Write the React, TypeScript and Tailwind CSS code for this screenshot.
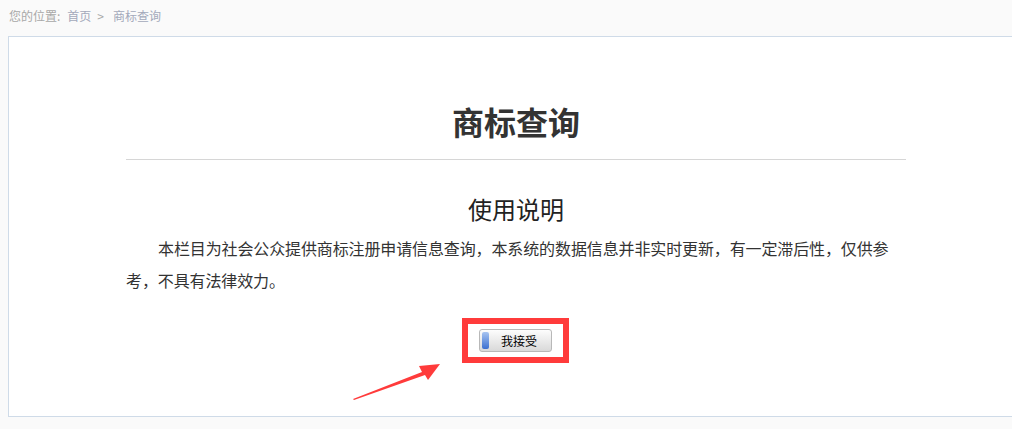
import React from 'react';

const App = () => {
  return (
    <div className="relative min-h-[429px] w-[1012px] overflow-hidden bg-[#fafafa] font-['Noto_Sans_CJK_SC',sans-serif]">
      {/* Breadcrumb */}
      <div className="flex h-[36px] items-center pl-[9px] pb-[4px] text-[12px] text-[#a8a8a8]">
        <span>您的位置:</span>
        <span className="ml-[7px] text-[#a3a9bb]">首页</span>
        <span className="ml-[6px]">&gt;</span>
        <span className="ml-[9px] text-[#a3a9bb]">商标查询</span>
      </div>

      {/* Content box */}
      <div className="ml-[8px] h-[381px] w-[1016px] border border-[#cfdbe8] bg-white">
        <div className="mx-auto w-[780px] pt-[64px]">
          <h1 className="text-center text-[32px] font-bold leading-[40px] text-[#333]">商标查询</h1>
          <div className="mt-[18px] h-px bg-[#d6d6d6]" />
          <h2 className="mt-[33px] text-center text-[24px] leading-[32px] text-[#222]">使用说明</h2>
          <p className="mt-[7px] whitespace-nowrap indent-[32px] text-[16px] leading-[32px] tracking-[-0.12px] text-[#333]">
            本栏目为社会公众提供商标注册申请信息查询，本系统的数据信息并非实时更新，有一定滞后性，仅供参
            <br />
            考，不具有法律效力。
          </p>
          <div className="mt-[22px] flex justify-center">
            <div className="ml-[-1px] flex h-[45px] w-[107px] items-center justify-center border-[6px] border-[#ff3b3b]">
              <button className="flex h-[23px] w-[73px] items-center overflow-hidden rounded-[3px] border border-[#b8b8b8] bg-gradient-to-b from-[#fdfdfd] to-[#d9d9d9] p-[2px]">
                <span className="h-full w-[7px] rounded-[2px] bg-gradient-to-b from-[#a8c4f0] to-[#3c6fd0]" />
                <span className="flex-1 text-center text-[12px] leading-none text-black">我接受</span>
              </button>
            </div>
          </div>
        </div>
      </div>

      {/* Annotation arrow */}
      <svg className="absolute left-[350px] top-[360px]" width="95" height="45" viewBox="0 0 95 45">
        <polygon points="3,39 72,12 69,6 90,4 78,20 75,15 4,40" fill="#ff3b3b" />
      </svg>
    </div>
  );
};

export default App;
